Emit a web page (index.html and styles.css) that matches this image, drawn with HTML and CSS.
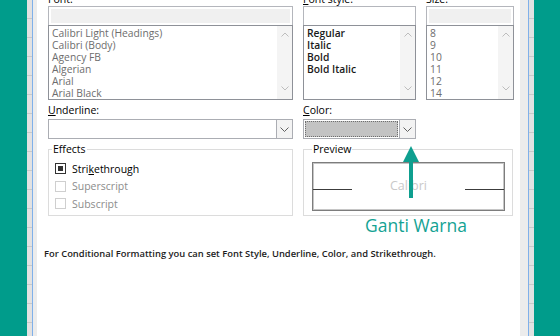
FILE: index.html
```html
<!DOCTYPE html>
<html lang="en">
<head>
    <meta charset="UTF-8">
    <title>Format Cells - Font</title>
    <link rel="stylesheet" href="styles.css">
</head>
<body>
    <div class="screen">
        <div class="teal"></div>
        <div class="edge edge-left"></div>

        <div class="dialog">
            <div class="fonts">
                <div class="field">
                    <label>Font:</label>
                    <div class="textbox off"></div>
                    <div class="listbox">
                        <ul class="items dim">
                            <li>Calibri Light (Headings)</li>
                            <li>Calibri (Body)</li>
                            <li>Agency FB</li>
                            <li>Algerian</li>
                            <li>Arial</li>
                            <li>Arial Black</li>
                        </ul>
                        <div class="scroll">
                            <svg width="8" height="5" viewBox="0 0 8 5"><polyline points="0.5,4.5 4,1 7.5,4.5" /></svg>
                            <svg width="8" height="5" viewBox="0 0 8 5"><polyline points="0.5,0.5 4,4 7.5,0.5" /></svg>
                        </div>
                    </div>
                </div>
                <div class="field">
                    <label><u>F</u>ont style:</label>
                    <div class="textbox"></div>
                    <div class="listbox">
                        <ul class="items strong">
                            <li>Regular</li>
                            <li>Italic</li>
                            <li>Bold</li>
                            <li>Bold Italic</li>
                        </ul>
                        <div class="scroll">
                            <svg width="8" height="5" viewBox="0 0 8 5"><polyline points="0.5,4.5 4,1 7.5,4.5" /></svg>
                            <svg width="8" height="5" viewBox="0 0 8 5"><polyline points="0.5,0.5 4,4 7.5,0.5" /></svg>
                        </div>
                    </div>
                </div>
                <div class="field">
                    <label>Size:</label>
                    <div class="textbox off"></div>
                    <div class="listbox">
                        <ul class="items dim">
                            <li>8</li>
                            <li>9</li>
                            <li>10</li>
                            <li>11</li>
                            <li>12</li>
                            <li>14</li>
                        </ul>
                        <div class="scroll">
                            <svg width="8" height="5" viewBox="0 0 8 5"><polyline points="0.5,4.5 4,1 7.5,4.5" /></svg>
                            <svg width="8" height="5" viewBox="0 0 8 5"><polyline points="0.5,0.5 4,4 7.5,0.5" /></svg>
                        </div>
                    </div>
                </div>
            </div>

            <div class="combos">
                <div class="field">
                    <label><u>U</u>nderline:</label>
                    <div class="combo">
                        <div class="value"></div>
                        <div class="drop">
                            <svg width="9" height="5" viewBox="0 0 9 5"><polyline points="0.5,0.5 4.5,4.5 8.5,0.5" /></svg>
                        </div>
                    </div>
                </div>
                <div class="field">
                    <label><u>C</u>olor:</label>
                    <div class="combo">
                        <div class="value swatch"></div>
                        <div class="drop">
                            <svg width="9" height="5" viewBox="0 0 9 5"><polyline points="0.5,0.5 4.5,4.5 8.5,0.5" /></svg>
                        </div>
                    </div>
                </div>
            </div>

            <div class="groups">
                <fieldset class="group effects">
                    <legend>Effects</legend>
                    <div class="check on"><span class="box"></span>Stri<u>k</u>ethrough</div>
                    <div class="check"><span class="box"></span>Superscript</div>
                    <div class="check"><span class="box"></span>Subscript</div>
                </fieldset>
                <fieldset class="group preview">
                    <legend>Preview</legend>
                    <div class="sample">
                        <span class="rule"></span>
                        <span class="sample-text">Calibri</span>
                        <span class="rule"></span>
                    </div>
                </fieldset>
            </div>

            <p class="note">For Conditional Formatting you can set Font Style, Underline, Color, and Strikethrough.</p>

            <!-- annotation drawn over the dialog -->
            <svg class="arrow" width="18" height="52" viewBox="0 0 18 52">
                <polygon points="9,0 1,16 17,16" />
                <rect x="7" y="14" width="4" height="38" />
            </svg>
            <div class="callout">Ganti Warna</div>
        </div>

        <div class="edge edge-right"></div>
        <div class="teal"></div>
    </div>
</body>
</html>
```

FILE: styles.css
```css
body {
    margin: 0;
    font-family: 'Open Sans', 'Noto Sans', sans-serif;
    color: #000;
}

.screen {
    display: flex;
    width: 560px;
    height: 336px;
    overflow: hidden;
}

.teal {
    width: 27px;
    flex: none;
    background-color: #009c8b;
}

/* sheet edge peeking out behind the dialog */
.edge {
    flex: none;
}

.edge-left {
    width: 10px;
    background:
        repeating-linear-gradient(to bottom, transparent 0 18px, #c9c9c9 18px 19px) 0 0 / 5px 100% no-repeat,
        linear-gradient(to right, #e2e2e2 0 5px, #7fb0ea 5px 6px, #ececec 6px 10px);
}

.edge-right {
    width: 14px;
    background:
        repeating-linear-gradient(to bottom, transparent 0 18px, #c9c9c9 18px 19px) 9px 0 / 5px 100% no-repeat,
        linear-gradient(to right, #ececec 0 8px, #7fb0ea 8px 9px, #e2e2e2 9px 14px);
}

.dialog {
    flex: 1;
    position: relative;
    background-color: #fff;
    padding: 0 6px 0 11px;
    font-size: 10.5px;
}

label {
    display: block;
    line-height: 14px;
    height: 14px;
}

.fonts {
    display: grid;
    grid-template-columns: 245px 113px 88px;
    column-gap: 10px;
    margin-top: -8px;
}

.textbox {
    height: 19px;
    box-sizing: border-box;
    border: 1px solid #b4b6bc;
    border-bottom: none;
    background-color: #fff;
}

.textbox.off {
    background-color: #f0f0f0;
    box-shadow: inset 0 0 0 2px #fff;
}

.listbox {
    display: flex;
    height: 75px;
    box-sizing: border-box;
    border: 1px solid #8e9198;
}

.items {
    flex: 1;
    margin: 0;
    padding: 1px 3px;
    list-style: none;
    font-size: 10.3px;
    line-height: 12px;
    white-space: nowrap;
    overflow: hidden;
}

.items.dim {
    color: #6d6d6d;
}

.items.strong {
    font-weight: 600;
    color: #1a1a1a;
}

.scroll {
    width: 15px;
    flex: none;
    display: flex;
    flex-direction: column;
    justify-content: space-between;
    align-items: center;
    padding: 6px 0 8px;
    background-color: #f4f4f4;
}

.scroll svg,
.drop svg {
    fill: none;
    stroke: #bdbdbd;
    stroke-width: 1;
}

.combos {
    display: grid;
    grid-template-columns: 245px 113px;
    column-gap: 10px;
    margin-top: 3px;
}

.combos label {
    margin-bottom: 2px;
}

.combo {
    display: flex;
    height: 20px;
    box-sizing: border-box;
    border: 1px solid #abadb3;
}

.combo .value {
    flex: 1;
}

.combo .swatch {
    margin: 1px;
    background-color: #c3c3c3;
    outline: 1px dotted #6e6e6e;
    outline-offset: -1px;
}

.drop {
    width: 15px;
    flex: none;
    display: flex;
    align-items: center;
    justify-content: center;
    border-left: 1px solid #abadb3;
    background-color: #f3f3f3;
}

.drop svg {
    stroke: #606060;
}

.groups {
    display: grid;
    grid-template-columns: 245px 210px;
    column-gap: 10px;
    margin-top: 3px;
}

.group {
    margin: 0;
    padding: 0 3px 0;
    height: 74px;
    box-sizing: border-box;
    border: 1px solid #dcdcdc;
}

.group legend {
    padding: 0 1px;
    line-height: 14px;
}

.check {
    display: flex;
    align-items: center;
    height: 17.5px;
    margin-left: 3px;
    color: #8c8c8c;
}

.check:first-of-type {
    margin-top: 4px;
}

.check .box {
    width: 11px;
    height: 11px;
    box-sizing: border-box;
    border: 1px solid #cfcfcf;
    margin-right: 6px;
}

.check.on {
    color: #000;
}

.check.on .box {
    border-color: #333;
    background-color: #333;
    box-shadow: inset 0 0 0 2px #fff;
}

.preview {
    padding: 0 7px 0 8px;
}

.sample {
    display: flex;
    align-items: flex-end;
    height: 49px;
    box-sizing: border-box;
    margin-top: 6px;
    padding-bottom: 17px;
    border: 1px solid #7d7d7d;
    box-shadow: inset 0 0 0 1px #c6c6c6;
}

.rule {
    width: 39px;
    height: 1px;
    margin-bottom: 3px;
    background-color: #3c3c3c;
}

.sample-text {
    flex: 1;
    text-align: center;
    font-size: 12.5px;
    line-height: 14px;
    color: #c9c9c9;
}

.note {
    margin: 31px 0 0 -4px;
    font-size: 9.4px;
    line-height: 14px;
    font-weight: 600;
    color: #1c1c1c;
}

.arrow {
    position: absolute;
    left: 365px;
    top: 146px;
    fill: #0e9f8f;
}

.callout {
    position: absolute;
    left: 328px;
    top: 214px;
    font-size: 17.5px;
    line-height: 22px;
    color: #13a293;
}
```
